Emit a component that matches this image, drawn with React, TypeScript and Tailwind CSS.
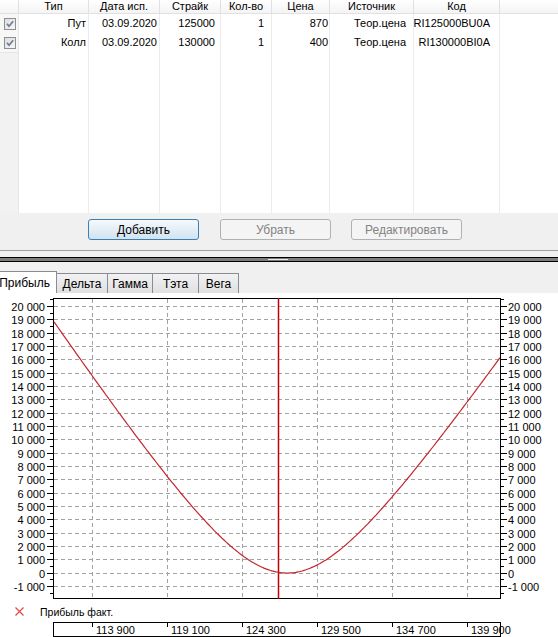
import React from 'react';

const HEAD = ['', 'Тип', 'Дата исп.', 'Страйк', 'Кол-во', 'Цена', 'Источник', 'Код', ''];
const ROWS = [
  ['Пут', '03.09.2020', '125000', '1', '870', 'Теор.цена', 'RI125000BU0A'],
  ['Колл', '03.09.2020', '130000', '1', '400', 'Теор.цена', 'RI130000BI0A'],
];
const PAD = ['pr-[2px]', 'pr-[2px]', 'pr-[5px]', 'pr-[7px]', 'pr-[1px]', 'pr-[7px]', 'pr-[9px]'];
const TABS = [
  ['Дельта', 'w-[51px]'],
  ['Гамма', 'w-[45px]'],
  ['Тэта', 'w-[46px]'],
  ['Вега', 'w-[40px]'],
];

const X_TICKS = [
  [92, '113 900'],
  [167, '119 100'],
  [242, '124 300'],
  [317, '129 500'],
  [392, '134 700'],
  [467, '139 900'],
] as const;

const yFor = (v: number) => 306 + (20000 - v) * 0.0133333;

function fmt(v: number) {
  if (v === 0) return '0';
  const k = Math.trunc(v / 1000);
  return `${k} 000`;
}

function Check() {
  return (
    <svg width="12" height="12" viewBox="0 0 12 12">
      <defs>
        <linearGradient id="cb" x1="0" y1="0" x2="1" y2="1">
          <stop offset="0" stopColor="#dcdcdc" />
          <stop offset="1" stopColor="#f8f8f8" />
        </linearGradient>
      </defs>
      <rect x="0.5" y="0.5" width="11" height="11" fill="url(#cb)" stroke="#8e8f8f" />
      <path d="M3 5.8 L5 8.2 L9.2 3.2" fill="none" stroke="#6a7d9c" strokeWidth="1.7" />
    </svg>
  );
}

function Chart() {
  const grid: number[] = [];
  for (let v = -1000; v <= 20000; v += 1000) grid.push(v);
  const minor: number[] = [];
  for (let v = -1500; v <= 20500; v += 1000) minor.push(v);

  const pts: string[] = [];
  for (let x = 54; x <= 500; x += 2) {
    const dx = x - 287;
    const s = dx < 0 ? 1.51 : 1.46;
    const y = 573 - s * (Math.sqrt(6400 + dx * dx) - 80);
    pts.push(`${x},${y.toFixed(1)}`);
  }

  return (
    <svg width="558" height="344" viewBox="0 293 558 344" className="block">
      {/* grid */}
      {grid.map((v) => {
        const y = Math.round(yFor(v)) + 0.5;
        return <line key={`h${v}`} x1="54" x2="500" y1={y} y2={y} stroke="#a3a3a3" strokeDasharray="4 3" />;
      })}
      {X_TICKS.map(([x]) => (
        <line key={`v${x}`} x1={x + 0.5} x2={x + 0.5} y1="299" y2="598" stroke="#a3a3a3" strokeDasharray="4 3" />
      ))}

      {/* frame */}
      <rect x="53.5" y="298.5" width="447" height="300" fill="none" stroke="#000" />

      {/* ticks + labels */}
      {grid.map((v) => {
        const y = Math.round(yFor(v)) + 0.5;
        return (
          <g key={`t${v}`}>
            <line x1="47" x2="53" y1={y} y2={y} stroke="#000" />
            <line x1="501" x2="507" y1={y} y2={y} stroke="#000" />
            <text x="45" y={y + 4} textAnchor="end" fontSize="11" fontFamily="'Liberation Sans', sans-serif" fill="#000">
              {fmt(v)}
            </text>
            <text x="508" y={y + 4} fontSize="11" fontFamily="'Liberation Sans', sans-serif" fill="#000">
              {fmt(v)}
            </text>
          </g>
        );
      })}
      {minor.map((v) => {
        const y = Math.round(yFor(v)) + 0.5;
        if (y < 298 || y > 599) return null;
        return (
          <g key={`m${v}`}>
            <line x1="50" x2="53" y1={y} y2={y} stroke="#000" />
            <line x1="501" x2="504" y1={y} y2={y} stroke="#000" />
          </g>
        );
      })}

      {/* current price */}
      <line x1="278.5" x2="278.5" y1="298" y2="599" stroke="#c40000" strokeWidth="1.5" />

      {/* profit curve */}
      <polyline points={pts.join(' ')} fill="none" stroke="#c3262b" strokeWidth="1.2" />

      {/* legend */}
      <path d="M15.5 607.5 L23.5 615.5 M23.5 607.5 L15.5 615.5" stroke="#e04848" strokeWidth="1.2" />
      <text x="40" y="615.5" fontSize="10.5" fontFamily="'Liberation Sans', sans-serif" fill="#000">
        Прибыль факт.
      </text>

      {/* x axis */}
      <rect x="53.5" y="622.5" width="447" height="14" fill="#fff" stroke="#000" />
      {X_TICKS.map(([x, label]) => (
        <g key={`x${x}`}>
          <line x1={x + 0.5} x2={x + 0.5} y1="622" y2="627" stroke="#000" />
          <text x={x + 4} y="634" fontSize="11" fontFamily="'Liberation Sans', sans-serif" fill="#000">
            {label}
          </text>
        </g>
      ))}
    </svg>
  );
}

export default function App() {
  return (
    <div className="w-[558px] h-[637px] overflow-hidden bg-[#f0f0f0] text-black text-[11px] leading-none font-['Liberation_Sans',sans-serif]">
      {/* Options table */}
      <div className="grid h-[213px] grid-cols-[19px_70px_71px_61px_51px_58px_84px_86px_1fr] grid-rows-[14px_19px_19px_1fr] bg-white">
        {HEAD.map((h, i) => (
          <div
            key={`h${i}`}
            className={`flex items-center justify-center border-[#e1e1e1] border-b bg-linear-to-b from-white to-[#f4f4f4] ${i < 8 ? 'border-r' : ''}`}
          >
            {h}
          </div>
        ))}
        {ROWS.map((r, ri) => (
          <React.Fragment key={`r${ri}`}>
            <div className="flex items-center pl-[4px] border-r border-[#e6e6e6] bg-[#f7f7f7]">
              <Check />
            </div>
            {r.map((c, ci) => (
              <div key={ci} className={`flex items-center justify-end border-r border-[#ececec] ${PAD[ci]}`}>
                {c}
              </div>
            ))}
            <div />
          </React.Fragment>
        ))}
        <div className="border-r border-t border-[#e6e6e6] bg-[#f2f2f2]" />
        {[1, 2, 3, 4, 5, 6, 7].map((i) => (
          <div key={`f${i}`} className="border-r border-[#ececec]" />
        ))}
        <div />
      </div>

      {/* Buttons */}
      <div className="h-[37px] pt-[6px] flex text-[12px]">
        <button className="ml-[88px] w-[111px] h-[21px] rounded-[3px] border border-[#3c7fb1] bg-linear-to-b from-[#f5f9fc] to-[#d2e3f0] flex items-center justify-center">
          Добавить
        </button>
        <button className="ml-[21px] w-[111px] h-[21px] rounded-[3px] border border-[#adb2b5] bg-[#f4f4f4] text-[#838383] flex items-center justify-center">
          Убрать
        </button>
        <button className="ml-[20px] w-[111px] h-[21px] rounded-[3px] border border-[#adb2b5] bg-[#f4f4f4] text-[#838383] flex items-center justify-center">
          Редактировать
        </button>
      </div>

      {/* Splitter */}
      <div className="h-px bg-[#a0a0a0]" />
      <div className="h-[6px]" />
      <div className="relative h-[5px] border-y border-black bg-[#7c7c7c]">
        <div className="absolute left-[268px] top-[-1px] w-[20px] h-px bg-black" />
        <div className="absolute left-[268px] top-[1px] w-[20px] h-px bg-[#e8e8e8]" />
      </div>
      <div className="h-[9px]" />

      {/* Tabs */}
      <div className="h-[22px] flex items-end text-[12px]">
        <div className="w-[57px] h-[22px] bg-white border-r border-t border-[#898c95] flex items-center justify-end pr-[6px]">
          Прибыль
        </div>
        {TABS.map(([t, w]) => (
          <div
            key={t}
            className={`${w} h-[20px] border-t border-r border-[#898c95] bg-linear-to-b from-[#f2f2f2] to-[#e0e0e0] flex items-center justify-center`}
          >
            {t}
          </div>
        ))}
      </div>

      {/* Chart */}
      <div className="h-[344px] bg-white">
        <Chart />
      </div>
    </div>
  );
}
